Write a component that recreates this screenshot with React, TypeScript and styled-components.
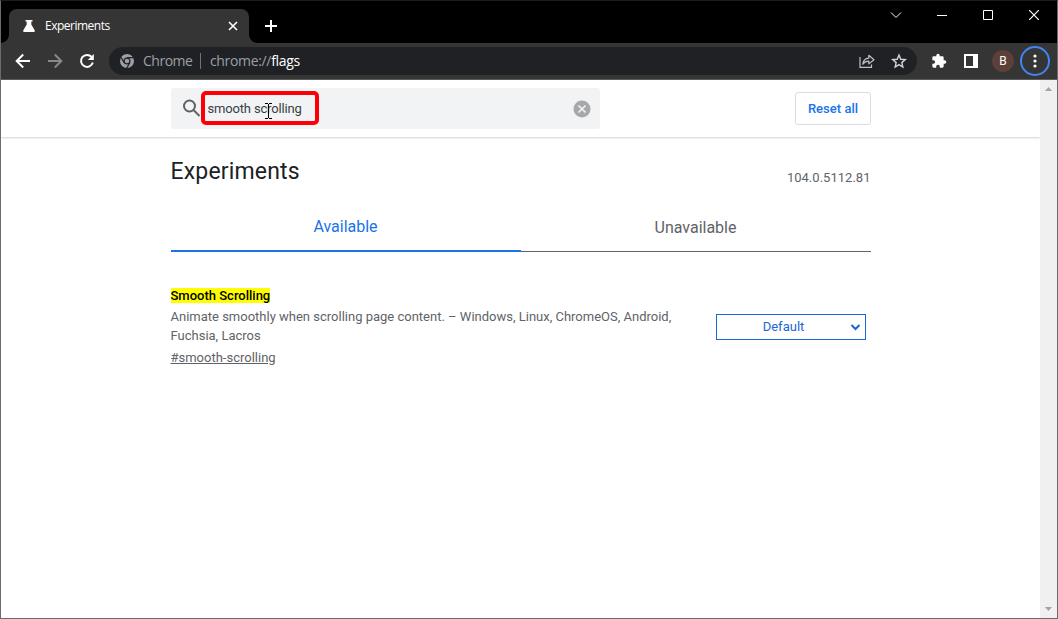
import React from "react";
import styled, { createGlobalStyle } from "styled-components";

const GlobalStyle = createGlobalStyle`
  *, *::before, *::after { box-sizing: border-box; }
  html, body { margin: 0; padding: 0; overflow: hidden; }
  body { font-family: Roboto, "Liberation Sans", sans-serif; font-size: 13px; background: #fff; }
  svg { display: block; flex: none; }
  button { font: inherit; margin: 0; padding: 0; border: 0; background: none; }
`;

const Window = styled.div`
  position: relative;
  display: flex;
  flex-direction: column;
  width: 1058px;
  height: 619px;
  border: 1px solid #6b6b6b;
  border-top-color: #1c1c1c;
  overflow: hidden;
`;

const TabStrip = styled.div`
  display: flex;
  align-items: flex-start;
  height: 42px;
  flex: none;
  background: #000;
  padding-left: 8px;
`;

const Tab = styled.div`
  position: relative;
  display: flex;
  align-items: center;
  width: 240px;
  height: 34px;
  margin-top: 8px;
  padding: 0 10px 0 13px;
  background: #353535;
  border-radius: 8px 8px 0 0;
  color: #fff;
  &::before, &::after {
    content: "";
    position: absolute;
    bottom: 0;
    width: 8px;
    height: 8px;
  }
  &::before { left: -8px; background: radial-gradient(circle at 0 0, #000 7.5px, #353535 8px); }
  &::after { right: -8px; background: radial-gradient(circle at 100% 0, #000 7.5px, #353535 8px); }
`;

const TabTitle = styled.span`
  flex: 1;
  margin-left: 9px;
  font: 12px/16px "Open Sans", "Noto Sans", sans-serif;
  letter-spacing: -0.5px;
`;

const NewTab = styled.button`
  margin: 19px 0 0 16px;
  width: 12px;
  height: 12px;
`;

const WindowControls = styled.div`
  display: flex;
  align-items: center;
  margin-left: auto;
  height: 28px;
`;

const Control = styled.button`
  display: grid;
  place-items: center;
  width: 46px;
  height: 28px;
`;

const Toolbar = styled.div`
  display: flex;
  align-items: center;
  height: 37px;
  flex: none;
  background: #353535;
  border-bottom: 1px solid #5c5c5c;
  padding-left: 14px;
`;

const NavButton = styled.button`
  width: 16px;
  height: 16px;
  margin-right: 16px;
`;

const AddressBar = styled.div`
  display: flex;
  align-items: center;
  width: 808px;
  height: 28px;
  margin-left: -2px;
  padding: 0 10px 0 11px;
  border-radius: 14px;
  background: #202124;
  color: #9aa0a6;
  font: 14px/20px "Open Sans", "Noto Sans", sans-serif;
`;

const SiteName = styled.span`
  width: 49px;
  margin-left: 9px;
  letter-spacing: -0.5px;
  white-space: nowrap;
`;

const Divider = styled.span`
  width: 1px;
  height: 16px;
  margin: 0 9px 0 8px;
  background: #6f7276;
`;

const Url = styled.span`
  flex: 1;
  letter-spacing: -0.34px;
  b { font-weight: 400; color: #fff; }
`;

const AddressIcons = styled.div`
  display: flex;
  align-items: center;
  gap: 16px;
`;

const Actions = styled.div`
  display: flex;
  align-items: center;
  margin-left: 14px;
`;

const SidePanelIcon = styled.svg`
  margin-left: 17px;
`;

const Avatar = styled.span`
  display: grid;
  place-items: center;
  width: 22px;
  height: 22px;
  margin: 0 6px 0 14px;
  border-radius: 50%;
  background: #5d4037;
  color: #fff;
  font: 12px/22px Roboto, sans-serif;
`;

const MenuButton = styled.button`
  display: grid;
  place-items: center;
  width: 30px;
  height: 30px;
  border: 2px solid #4285f4;
  border-radius: 50%;
`;

const Viewport = styled.div`
  display: flex;
  flex: 1;
  min-height: 0;
  background: #fff;
`;

const Page = styled.main`
  flex: 1;
  min-width: 0;
`;

const Header = styled.header`
  display: flex;
  align-items: flex-start;
  justify-content: space-between;
  height: 57px;
  padding: 8px 169px 0 170px;
  box-shadow: 0 1px 2px rgba(0, 0, 0, 0.18);
`;

const SearchField = styled.div`
  position: relative;
  display: flex;
  align-items: center;
  width: 429px;
  height: 41px;
  padding: 0 9px 0 11px;
  border-radius: 3px;
  background: #f1f3f4;
  color: #3c4043;
`;

const SearchText = styled.span`
  flex: 1;
  margin-left: 6.5px;
  line-height: 16px;
  letter-spacing: -0.17px;
`;

const Highlight = styled.span`
  position: absolute;
  left: 30px;
  top: 3px;
  width: 118px;
  height: 34px;
  border: 4px solid #fb0007;
  border-radius: 5px;
`;

const Pointer = styled.svg`
  position: absolute;
  left: 94px;
  top: 15px;
`;

const ResetButton = styled.button`
  width: 76px;
  height: 33px;
  margin-top: 4px;
  border: 1px solid #dadce0;
  border-radius: 3px;
  color: #1a73e8;
  font-weight: 500;
  letter-spacing: 0.02px;
`;

const Content = styled.section`
  width: 700px;
  margin-left: 169.5px;
`;

const TitleRow = styled.div`
  display: flex;
  justify-content: space-between;
  align-items: flex-end;
  height: 50px;
`;

const Title = styled.h1`
  margin: 0;
  color: #202124;
  font-size: 23px;
  font-weight: 400;
  line-height: 28px;
  letter-spacing: 0.17px;
  padding-bottom: 1px;
`;

const Version = styled.span`
  color: #5f6368;
  line-height: 18px;
  letter-spacing: 0.02px;
`;

const Tabs = styled.div`
  display: flex;
  align-items: flex-end;
  width: 700px;
  height: 65px;
  margin-left: 0.5px;
`;

const TabItem = styled.button<{ $active?: boolean }>`
  flex: 1;
  height: 49px;
  padding: 0 1px ${(p) => (p.$active ? 1 : 0)}px 0;
  border-bottom: ${(p) => (p.$active ? "2px solid #1a73e8" : "1px solid #5f6368")};
  color: ${(p) => (p.$active ? "#1a73e8" : "#5f6368")};
  font-size: 16px;
`;

const Flag = styled.article`
  display: flex;
  justify-content: space-between;
  padding: 34px 4.5px 0 0;
`;

const FlagInfo = styled.div`
  width: 520px;
  color: #5f6368;
  line-height: 19px;
`;

const FlagName = styled.h2`
  margin: 0 0 2px;
  font-size: 13px;
  font-weight: 500;
  line-height: 19px;
  color: #000;
  mark { background: #ff0; color: #000; }
`;

const Description = styled.p`
  margin: 0 0 3px;
`;

const Permalink = styled.a`
  text-decoration: underline;
`;

const SelectBox = styled.div`
  display: flex;
  align-items: center;
  width: 150px;
  height: 26px;
  margin-top: 28px;
  padding-right: 4px;
  border: 1px solid #1967d2;
  color: #1967d2;
  span { flex: 1; text-align: center; letter-spacing: 0.02px; padding-bottom: 1px; }
`;

const Scrollbar = styled.div`
  display: flex;
  flex-direction: column;
  align-items: center;
  justify-content: space-between;
  width: 17px;
  padding: 7px 0 7px;
  background: #f0f0f0;
`;

export default function App() {
  return (
    <Window>
      <GlobalStyle />
      <TabStrip>
        <Tab>
          <svg width="14" height="14" viewBox="0 0 14 14" fill="#fff">
            <path d="M3.5 1h7v1.4H9.3v3.1l3.5 6.1q.5 1.4-.9 1.4H2.1q-1.4 0-.9-1.4l3.5-6.1V2.4H3.5z" />
          </svg>
          <TabTitle>Experiments</TabTitle>
          <svg width="12" height="12" viewBox="0 0 12 12" stroke="#fff" strokeWidth="1.6">
            <path d="M2 2l8 8M10 2l-8 8" />
          </svg>
        </Tab>
        <NewTab aria-label="New tab">
          <svg width="12" height="12" viewBox="0 0 12 12" stroke="#fff" strokeWidth="2">
            <path d="M6 0v12M0 6h12" />
          </svg>
        </NewTab>
        <WindowControls>
          <Control aria-label="Search tabs">
            <svg width="12" height="8" viewBox="0 0 12 8" fill="none" stroke="#fff">
              <path d="M1 1.5l5 5 5-5" />
            </svg>
          </Control>
          <Control aria-label="Minimize">
            <svg width="10" height="10" viewBox="0 0 10 10" stroke="#fff">
              <path d="M0 5.5h10" />
            </svg>
          </Control>
          <Control aria-label="Maximize">
            <svg width="10" height="10" viewBox="0 0 10 10" fill="none" stroke="#fff">
              <path d="M.5.5h9v9h-9z" />
            </svg>
          </Control>
          <Control aria-label="Close">
            <svg width="10" height="10" viewBox="0 0 10 10" stroke="#fff" strokeWidth="1.2">
              <path d="M0 0l10 10M10 0L0 10" />
            </svg>
          </Control>
        </WindowControls>
      </TabStrip>

      <Toolbar>
        <NavButton aria-label="Back">
          <svg width="16" height="16" viewBox="0 0 16 16" fill="none" stroke="#fff" strokeWidth="2">
            <path d="M15 8H2M8.2 1.5L1.7 8l6.5 6.5" />
          </svg>
        </NavButton>
        <NavButton aria-label="Forward">
          <svg width="16" height="16" viewBox="0 0 16 16" fill="none" stroke="#888" strokeWidth="2">
            <path d="M1 8h13M7.8 1.5L14.3 8l-6.5 6.5" />
          </svg>
        </NavButton>
        <NavButton aria-label="Reload">
          <svg width="16" height="16" viewBox="0 0 16 16" fill="none" stroke="#fff" strokeWidth="2">
            <path d="M12.6 4A6 6 0 1 0 13.8 9.5" />
            <path d="M14.8 1v6H8.8z" fill="#fff" stroke="none" />
          </svg>
        </NavButton>
        <AddressBar>
          <svg width="14" height="14" viewBox="0 0 14 14">
            <circle cx="7" cy="7" r="7" fill="#9aa0a6" />
            <circle cx="7" cy="7" r="2.9" fill="#9aa0a6" stroke="#202124" strokeWidth="1.2" />
            <path d="M7 3.7h6.3M4.15 8.65L1 3.2M9.85 8.65L6.7 14.1" stroke="#202124" strokeWidth="1.2" />
          </svg>
          <SiteName>Chrome</SiteName>
          <Divider />
          <Url>chrome://<b>flags</b></Url>
          <AddressIcons>
            <svg width="16" height="16" viewBox="0 0 16 16" fill="none" stroke="#bdc1c6" strokeWidth="1.2">
              <path d="M1 4v10.400h11.500v-3" />
              <path d="M3.8 11.2C4.2 7.3 6.2 5.5 9.8 5.2V2.3l5.2 4.4-5.2 4.2V8.2C7 8.2 5.2 9.1 3.8 11.2z" strokeLinejoin="round" />
            </svg>
            <svg width="16" height="16" viewBox="0 0 16 16" fill="none" stroke="#d0d3d7" strokeWidth="1.4">
              <path d="M8 2.1l1.75 4.15 4.5.4-3.4 2.95 1 4.4L8 11.65 4.15 14l1-4.4-3.4-2.95 4.5-.4z" />
            </svg>
          </AddressIcons>
        </AddressBar>
        <Actions>
          <svg width="16" height="16" viewBox="0 0 24 24" fill="#fff">
            <path d="M20.5 11H19V7a2 2 0 0 0-2-2h-4V3.5a2.5 2.5 0 0 0-5 0V5H4a2 2 0 0 0-2 2v3.8h1.5a2.7 2.7 0 0 1 0 5.4H2V20a2 2 0 0 0 2 2h3.8v-1.5a2.7 2.7 0 0 1 5.4 0V22H17a2 2 0 0 0 2-2v-4h1.5a2.5 2.5 0 0 0 0-5z" />
          </svg>
          <SidePanelIcon width="14" height="14" viewBox="0 0 14 14">
            <path d="M0 0h14v14H0zM2 2v10h7V2z" fill="#fff" fillRule="evenodd" />
          </SidePanelIcon>
          <Avatar>B</Avatar>
          <MenuButton aria-label="Menu">
            <svg width="4" height="16" viewBox="0 0 4 16" fill="#fff">
              <circle cx="2" cy="3" r="1.6" />
              <circle cx="2" cy="8" r="1.6" />
              <circle cx="2" cy="13" r="1.6" />
            </svg>
          </MenuButton>
        </Actions>
      </Toolbar>

      <Viewport>
        <Page>
          <Header>
            <SearchField>
              <svg width="19" height="19" viewBox="0 0 19 19" fill="none" stroke="#5f6368" strokeWidth="2">
                <circle cx="7.5" cy="7" r="5.5" />
                <path d="M11.5 11l6 6" />
              </svg>
              <SearchText>smooth scrolling</SearchText>
              <svg width="18" height="18" viewBox="0 0 18 18">
                <circle cx="9" cy="9" r="8.5" fill="#a5a9ac" />
                <path d="M5.5 5.5l7 7M12.5 5.5l-7 7" stroke="#f1f3f4" strokeWidth="1.7" />
              </svg>
              <Highlight />
              <Pointer width="7" height="16" viewBox="0 0 7 16" fill="none" stroke="#000">
                <path d="M0 .5h3M4 .5h3M3.5 1v14M0 15.5h3M4 15.5h3" />
              </Pointer>
            </SearchField>
            <ResetButton>Reset all</ResetButton>
          </Header>
          <Content>
            <TitleRow>
              <Title>Experiments</Title>
              <Version>104.0.5112.81</Version>
            </TitleRow>
            <Tabs>
              <TabItem $active>Available</TabItem>
              <TabItem>Unavailable</TabItem>
            </Tabs>
            <Flag>
              <FlagInfo>
                <FlagName><mark>Smooth Scrolling</mark></FlagName>
                <Description>
                  Animate smoothly when scrolling page content. – Windows, Linux, ChromeOS, Android, Fuchsia, Lacros
                </Description>
                <Permalink>#smooth-scrolling</Permalink>
              </FlagInfo>
              <SelectBox>
                <span>Default</span>
                <svg width="11" height="7" viewBox="0 0 11 7" fill="none" stroke="#1967d2" strokeWidth="2">
                  <path d="M1.5 1l4 4 4-4" />
                </svg>
              </SelectBox>
            </Flag>
          </Content>
        </Page>
        <Scrollbar>
          <svg width="7" height="4" viewBox="0 0 7 4" fill="#a3a3a3"><path d="M0 4L3.5 0 7 4z" /></svg>
          <svg width="7" height="4" viewBox="0 0 7 4" fill="#a3a3a3"><path d="M0 0l3.5 4L7 0z" /></svg>
        </Scrollbar>
      </Viewport>
    </Window>
  );
}
